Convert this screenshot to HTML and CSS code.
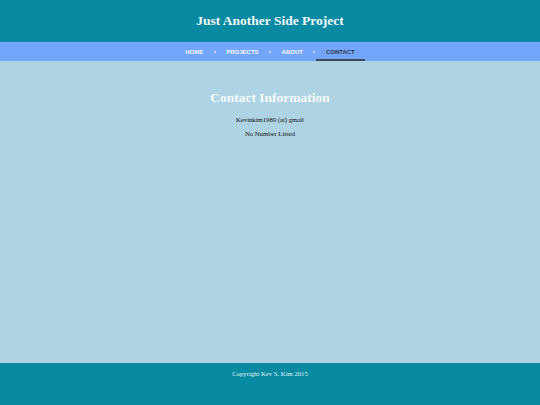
FILE: index.html
```html
<!DOCTYPE html>
<html lang="en">
<head>
<meta charset="utf-8">
<title>Just Another Side Project</title>
<link rel="stylesheet" href="styles.css">
</head>
<body>
<div class="page">
  <header class="site-header">
    <h1 class="site-title">Just Another Side Project</h1>
  </header>
  <nav class="site-nav">
    <ul class="nav-list">
      <li class="nav-item"><a href="#">Home</a></li>
      <li class="nav-sep"></li>
      <li class="nav-item"><a href="#">Projects</a></li>
      <li class="nav-sep"></li>
      <li class="nav-item"><a href="#">About</a></li>
      <li class="nav-sep"></li>
      <li class="nav-item is-active"><a href="#">Contact</a></li>
    </ul>
  </nav>
  <main class="content">
    <h2 class="content-title">Contact Information</h2>
    <p class="content-line">Kevinkim1989 (at) gmail</p>
    <p class="content-line">No Number Listed</p>
  </main>
  <footer class="site-footer">
    <p class="copyright">Copyright Kev S. Kim 2015</p>
  </footer>
</div>
</body>
</html>
```

FILE: styles.css
```css
html, body {
  margin: 0;
  padding: 0;
  height: 100%;
}

body {
  font-family: "Liberation Serif", "Times New Roman", serif;
  background: #aed3e3;
}

.page {
  display: flex;
  flex-direction: column;
  min-height: 100%;
}

.site-header {
  background: #088ba2;
  height: 42px;
  display: flex;
  align-items: center;
  justify-content: center;
}

.site-title {
  margin: 0;
  color: #f4f8f9;
  font-size: 13.5px;
  font-weight: bold;
}

.site-nav {
  background: #73a6fb;
  height: 19px;
}

.nav-list {
  list-style: none;
  margin: 0;
  padding: 0;
  height: 100%;
  display: flex;
  justify-content: center;
  align-items: stretch;
}

.nav-item {
  display: flex;
  align-items: center;
  padding: 0 10px;
  border-bottom: 2px solid transparent;
  box-sizing: border-box;
  padding-top: 2px;
}

.nav-item a {
  font-family: "Liberation Sans", Arial, sans-serif;
  font-size: 6px;
  font-weight: bold;
  text-transform: uppercase;
  text-decoration: none;
  color: #f5f8ff;
}

.nav-item.is-active {
  border-bottom-color: #3c4a5e;
}

.nav-item.is-active a {
  color: #2e3744;
}

.nav-sep {
  width: 3px;
  display: flex;
  align-items: center;
  justify-content: center;
}

.nav-sep::before {
  content: "";
  width: 2px;
  height: 2px;
  background: #c5d8fb;
}

.content {
  flex: 1;
  text-align: center;
  padding-top: 29px;
}

.content-title {
  margin: 0 0 10px;
  color: #f6fafc;
  font-size: 13.5px;
  font-weight: bold;
}

.content-line {
  margin: 0 0 7px;
  font-size: 6.7px;
  color: #111;
}

.site-footer {
  background: #088ba2;
  height: 42px;
  text-align: center;
}

.copyright {
  margin: 0;
  padding-top: 7px;
  font-size: 6.7px;
  color: #e2f1f4;
}
```
